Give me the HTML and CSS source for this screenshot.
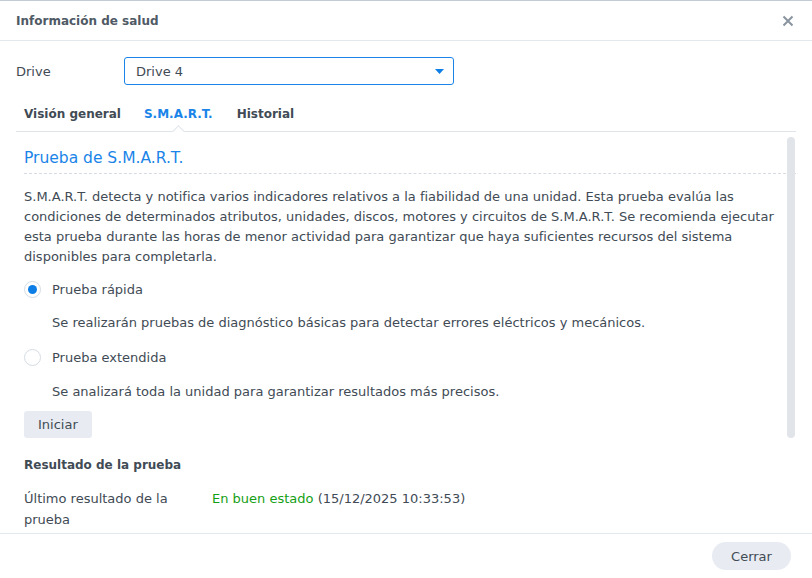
FILE: index.html
```html
<!DOCTYPE html>
<html lang="es">
<head>
    <meta charset="UTF-8">
    <title>Información de salud</title>
    <link rel="stylesheet" href="styles.css">
</head>
<body>
    <div class="dialog">
        <div class="header">
            <span class="title">Información de salud</span>
            <span class="close">
                <svg width="12" height="12" viewBox="0 0 12 12"><path d="M1.5 1.5 L10.5 10.5 M10.5 1.5 L1.5 10.5" stroke="#8a949e" stroke-width="2" fill="none"/></svg>
            </span>
        </div>

        <div class="drive-row">
            <span class="label">Drive</span>
            <div class="select">
                <span>Drive 4</span>
                <svg width="9" height="5" viewBox="0 0 9 5"><path d="M0 0 H9 L4.5 5 Z" fill="#0d7ee6"/></svg>
            </div>
        </div>

        <div class="tabs">
            <span class="tab">Visión general</span>
            <span class="tab active">S.M.A.R.T.</span>
            <span class="tab">Historial</span>
        </div>

        <div class="content">
            <h2 class="section-title">Prueba de S.M.A.R.T.</h2>
            <p class="intro">S.M.A.R.T. detecta y notifica varios indicadores relativos a la fiabilidad de una unidad. Esta prueba evalúa las condiciones de determinados atributos, unidades, discos, motores y circuitos de S.M.A.R.T. Se recomienda ejecutar esta prueba durante las horas de menor actividad para garantizar que haya suficientes recursos del sistema disponibles para completarla.</p>

            <div class="radio checked"><i></i>Prueba rápida</div>
            <p class="desc">Se realizarán pruebas de diagnóstico básicas para detectar errores eléctricos y mecánicos.</p>
            <div class="radio second"><i></i>Prueba extendida</div>
            <p class="desc">Se analizará toda la unidad para garantizar resultados más precisos.</p>

            <button class="btn">Iniciar</button>

            <h3 class="subhead">Resultado de la prueba</h3>
            <div class="result">
                <span class="key">Último resultado de la prueba</span>
                <span class="val"><span class="ok">En buen estado</span> (15/12/2025 10:33:53)</span>
            </div>

            <div class="scrollbar"></div>
        </div>

        <div class="footer">
            <button class="btn pill">Cerrar</button>
        </div>
    </div>
</body>
</html>
```

FILE: styles.css
```css
* {
    margin: 0;
    padding: 0;
    box-sizing: border-box;
}

body {
    font-family: "DejaVu Sans", Verdana, sans-serif;
    font-size: 13px;
    color: #414b55;
    background: #fff;
}

.dialog {
    width: 812px;
    height: 578px;
    display: flex;
    flex-direction: column;
    border-top: 1px solid #c3ccd5;
}

.header {
    height: 40px;
    display: flex;
    align-items: center;
    justify-content: space-between;
    padding: 0 18px 0 16px;
    border-bottom: 1px solid #e3e8ed;
}
.title {
    font-weight: bold;
    font-size: 12px;
    color: #4f5a65;
}
.close {
    display: flex;
}

.drive-row {
    display: flex;
    align-items: center;
    margin-top: 16px;
    padding-left: 16px;
}
.label {
    width: 108px;
}
.select {
    width: 330px;
    height: 28px;
    border: 1px solid #1a84e8;
    border-radius: 3px;
    display: flex;
    align-items: center;
    justify-content: space-between;
    padding: 0 9px 0 11px;
}

.tabs {
    margin: 12px 16px 0;
    height: 35px;
    display: flex;
    align-items: center;
    gap: 24px;
    padding-left: 8px;
    border-bottom: 1px solid #dfe4ea;
}
.tab {
    font-size: 12px;
    font-weight: bold;
    color: #414b55;
    position: relative;
    height: 100%;
    display: flex;
    align-items: center;
}
.tab.active {
    color: #1a84e8;
    margin-left: -1px;
}
.tab.active::after {
    content: "";
    position: absolute;
    left: 50%;
    bottom: -5px;
    width: 8px;
    height: 8px;
    margin-left: -4px;
    background: #fff;
    border-left: 1px solid #dfe4ea;
    border-top: 1px solid #dfe4ea;
    transform: rotate(45deg);
}

.content {
    flex: 1;
    position: relative;
    padding: 0 26px 0 24px;
    overflow: hidden;
}
.section-title {
    font-size: 15.5px;
    font-weight: normal;
    color: #1a84e8;
    height: 42px;
    line-height: 1;
    padding-top: 19px;
    border-bottom: 1px dashed #d5dbe1;
    margin-right: -10px;
}
.intro {
    line-height: 20px;
    margin-top: 13px;
}
.radio {
    display: flex;
    align-items: center;
    gap: 11px;
    margin-top: 11px;
    height: 22px;
}
.radio.second {
    margin-top: 13px;
}
.radio i {
    width: 17px;
    height: 17px;
    border-radius: 50%;
    border: 1px solid #d5dce4;
    background: #fff;
    position: relative;
}
.radio.checked i::after {
    content: "";
    position: absolute;
    left: 3px;
    top: 3px;
    width: 9px;
    height: 9px;
    border-radius: 50%;
    background: #0d7ee6;
}
.desc {
    padding-left: 28px;
    margin-top: 13px;
    line-height: 20px;
}
.radio.second + .desc {
    margin-top: 14px;
}
.btn {
    font: inherit;
    color: #414b55;
    border: none;
    background: #e8ecf2;
    border-radius: 3px;
    height: 27px;
    padding: 0 14px;
    margin-top: 9px;
}
.subhead {
    font-size: 12px;
    font-weight: bold;
    line-height: 15px;
    margin-top: 20px;
}
.result {
    display: flex;
    margin-top: 15px;
    line-height: 21px;
}
.key {
    width: 188px;
    padding-right: 20px;
}
.ok {
    color: #14a014;
}
.scrollbar {
    position: absolute;
    right: 17px;
    top: 5px;
    width: 8px;
    height: 301px;
    border-radius: 4px;
    background: #e1e4e8;
}

.footer {
    height: 45px;
    border-top: 1px solid #e3e8ed;
    display: flex;
    align-items: center;
    justify-content: flex-end;
    padding-right: 21px;
}
.btn.pill {
    margin: 0;
    width: 79px;
    height: 28px;
    border-radius: 14px;
}
```
